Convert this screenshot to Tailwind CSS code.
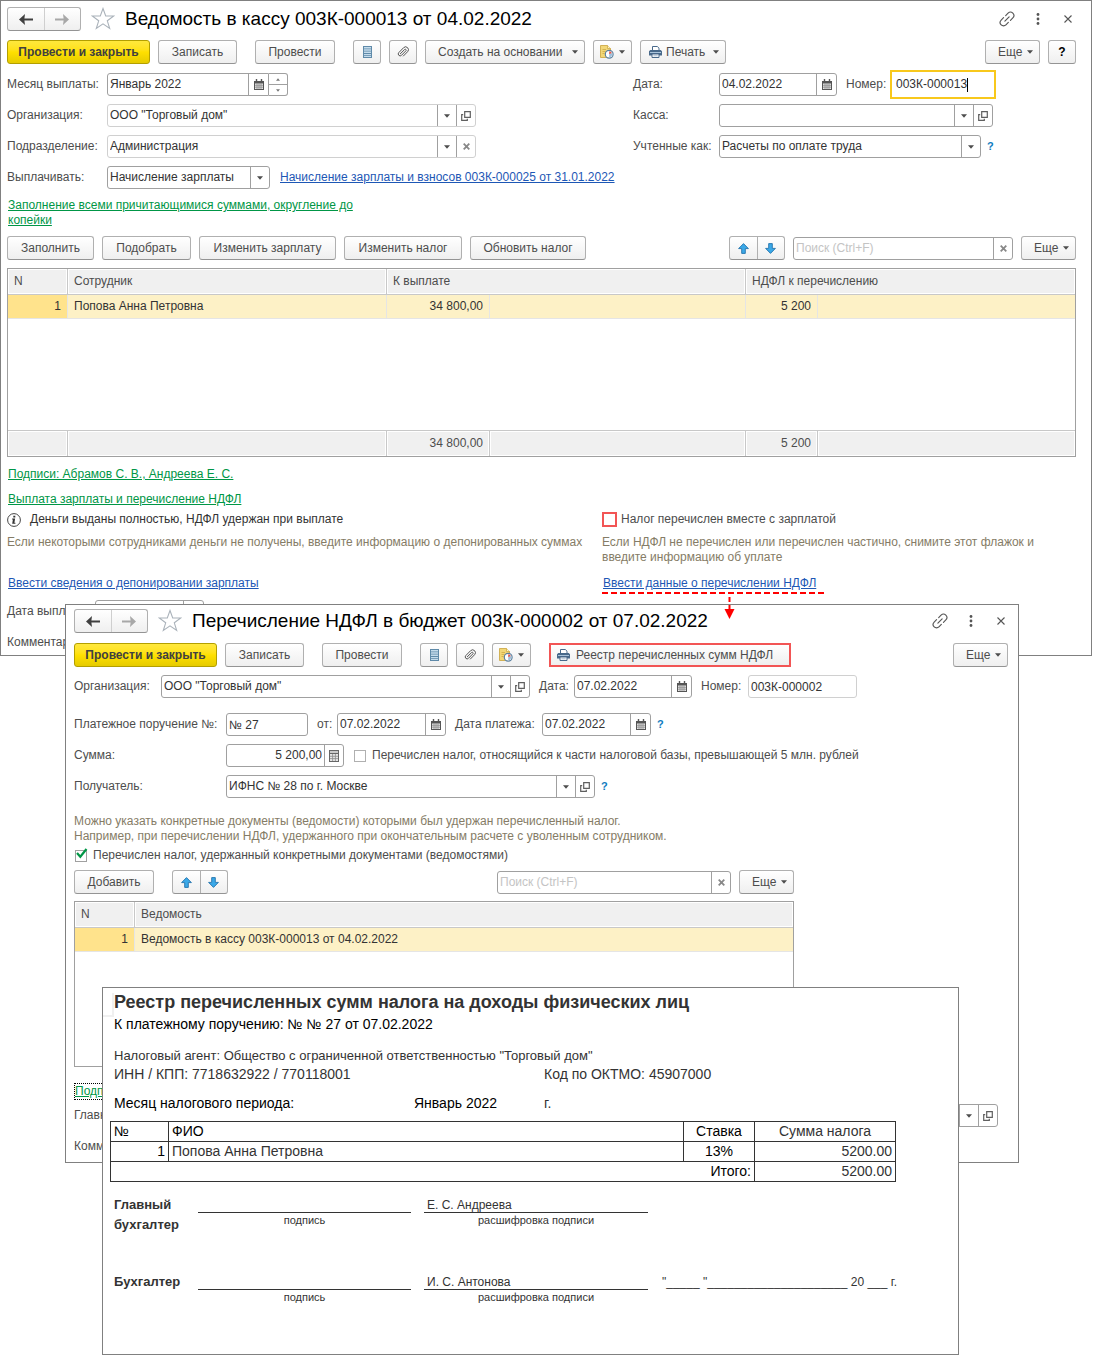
<!DOCTYPE html>
<html lang="ru">
<head>
<meta charset="UTF-8">
<meta name="viewport" content="width=device-width, initial-scale=1.0">
<title>Ведомость в кассу 003К-000013 от 04.02.2022</title>
<script src="https://cdn.jsdelivr.net/npm/@tailwindcss/browser@4"></script>
</head>
<body class="relative min-h-screen bg-white font-['Liberation_Sans',Arial,sans-serif] text-xs/[15px] text-[#4d4d4d]">

<!-- icons -->
<svg class="hidden" xmlns="http://www.w3.org/2000/svg">
  <symbol id="i-back" viewBox="0 0 14 11"><path fill="currentColor" d="M6 0 0 5.5 6 11 5.4 6.6H14V4.4H5.4z"/></symbol>
  <symbol id="i-forward" viewBox="0 0 14 11"><path fill="currentColor" d="M8 0l6 5.500L8 11l.6-4.400H0V4.400h8.600z"/></symbol>
  <symbol id="i-star" viewBox="0 0 24 24"><path fill="none" stroke="currentColor" stroke-width="1.100" d="M12 1.500l2.700 7.500h8l-6.400 4.800 2.400 7.700L12 16.900l-6.700 4.600 2.400-7.700L1.300 9h8z"/></symbol>
  <symbol id="i-link" viewBox="0 0 24 24"><path fill="none" stroke="currentColor" stroke-width="1.500" stroke-linecap="round" transform="rotate(-45 12 12)" d="M10 16.500H5.500a4.500 4.500 0 0 1 0-9H10M14 7.500h4.500a4.500 4.500 0 0 1 0 9H14M8 12h8"/></symbol>
  <symbol id="i-dots" viewBox="0 0 4 12"><g fill="currentColor"><circle cx="2" cy="1.500" r="1.400"/><circle cx="2" cy="6" r="1.400"/><circle cx="2" cy="10.500" r="1.400"/></g></symbol>
  <symbol id="i-close" viewBox="0 0 8 8"><path fill="none" stroke="currentColor" stroke-width="1.100" d="M.5.5l7 7M7.500.5l-7 7"/></symbol>
  <symbol id="i-clear" viewBox="0 0 7 7"><path fill="none" stroke="currentColor" stroke-width="1.800" d="M.7.7l5.600 5.600M6.300.7L.7 6.300"/></symbol>
  <symbol id="i-caret" viewBox="0 0 6 4"><path fill="currentColor" d="M0 .3h6L3 3.700z"/></symbol>
  <symbol id="i-caret-up" viewBox="0 0 4 3"><path fill="currentColor" d="M0 2.700h4L2 .3z"/></symbol>
  <symbol id="i-open" viewBox="0 0 10 10"><path fill="none" stroke="#5f5f5f" stroke-width="1.200" d="M3.700.7h5.600v5.600H3.700zM2.200 3.700H.7v5.600h5.600V7.800"/></symbol>
  <symbol id="i-calendar" viewBox="0 0 10 11"><path fill="#555" d="M0 2h10v9H0zM1.800 0h1.400v2H1.800zM6.800 0h1.400v2H6.800z"/><path fill="#e6e6e6" d="M1 4.500h8V10H1z"/><path stroke="#8a8a8a" stroke-width=".8" d="M1 6.300h8M1 8.200h8M3 4.500V10M5 4.500V10M7 4.500V10"/></symbol>
  <symbol id="i-calc" viewBox="0 0 10 12"><path fill="#666" d="M0 0h10v12H0z"/><path fill="#c9c9c9" d="M1 1h8v2H1z"/><path fill="#e6e6e6" d="M1 4h8v7H1z"/><path stroke="#8a8a8a" stroke-width=".8" d="M1 6.300h8M1 8.600h8M3.600 4v7M6.400 4v7"/></symbol>
  <symbol id="i-list" viewBox="0 0 9 12"><path fill="#5f8aa9" d="M0 0h9v12H0z"/><path fill="#c5dcec" d="M1 1h7v1.500H1zM1 3.300h7v1.500H1zM1 5.600h7v1.500H1zM1 7.900h7v1.400H1zM1 10h7v1H1z"/></symbol>
  <symbol id="i-clip" viewBox="0 0 12 12"><path fill="none" stroke="#555" stroke-width="1" stroke-linecap="round" d="M3.300 7.800l4.300-4.300a.9.9 0 0 1 1.300 1.300L4.500 9.300a1.900 1.900 0 0 1-2.700-2.700L6.600 1.700a2.800 2.800 0 0 1 4 4L6.400 10"/></symbol>
  <symbol id="i-report" viewBox="0 0 14 14"><path fill="#f2d777" stroke="#c9a33c" stroke-width=".8" d="M.5.5h7l3 3v9h-10z"/><path fill="#fff4c4" stroke="#c9a33c" stroke-width=".7" d="M7.500.5v3h3"/><path stroke="#c9a33c" stroke-width=".7" d="M2.500 4.500H6M2.500 6.500h3M2.500 8.500h2"/><circle cx="9.200" cy="9.200" r="3.900" fill="#fff" stroke="#5b7f9e" stroke-width="1.200"/><path fill="#e0574a" d="M9.200 9.200V6.200a3 3 0 0 1 2.800 2z"/><path fill="#9cc0dd" d="M9.200 9.200l2.800-1a3 3 0 0 1-2.800 4z"/></symbol>
  <symbol id="i-print" viewBox="0 0 13 12"><path fill="#fff" stroke="#48698a" d="M3.500 4.500v-4h4.800l1.700 1.700v2.300"/><path fill="#48698a" d="M1.300 4h10.400L13 5.300v4.200H0V5.300z"/><path fill="#a9c3da" d="M1 6h11v1H1z"/><path fill="#fff" stroke="#48698a" d="M3 8h7v3.500H3z"/><path stroke="#8fa9c2" stroke-width=".8" d="M4.300 9.800h4.400"/></symbol>
  <symbol id="i-up" viewBox="0 0 11 11"><path fill="#3ba9e8" stroke="#2373ad" stroke-width=".9" stroke-linejoin="round" d="M5.500.6l4.900 5H7.300v4.800H3.700V5.600H.6z"/></symbol>
  <symbol id="i-down" viewBox="0 0 11 11"><path fill="#3ba9e8" stroke="#2373ad" stroke-width=".9" stroke-linejoin="round" d="M5.500 10.400l4.900-5H7.300V.6H3.700v4.800H.6z"/></symbol>
  <symbol id="i-info" viewBox="0 0 14 14"><circle cx="7" cy="7" r="6.400" fill="none" stroke="#444" stroke-width="1"/><path fill="#333" d="M6.300 2.800h2v1.700h-2zM5.200 5.600h2.900L7.400 9.800h1v1H5.200l.7-4.200h-.9z"/></symbol>
  <symbol id="i-check" viewBox="0 0 13 12"><path fill="none" stroke="#009646" stroke-width="2.200" d="M2 5l3.300 3.700L11.500 1"/></symbol>
</svg>

<!-- Ведомость в кассу -->
<main class="mr-[2px] border border-[#808080] bg-white pt-[6px] pr-[7px] pb-px pl-[6px]">
  <header class="flex h-6 items-center">
    <div class="flex h-6 w-[74px] rounded-[3px] border border-[#b0b0b0] border-b-[#949494] bg-linear-to-b from-white to-[#efefef]">
      <button class="flex flex-1 items-center justify-center border-r border-[#cfcfcf] text-[#404040]" aria-label="Назад"><svg class="h-[11px] w-3.5"><use href="#i-back"/></svg></button>
      <button class="flex flex-1 items-center justify-center text-[#a8a8a8]" aria-label="Вперед"><svg class="h-[11px] w-3.5"><use href="#i-forward"/></svg></button>
    </div>
    <button class="ml-2.5 text-[#aab2ba]" aria-label="В избранное"><svg class="size-6"><use href="#i-star"/></svg></button>
    <h1 class="ml-2.5 text-[19px] leading-6 text-black">Ведомость в кассу 003К-000013 от 04.02.2022</h1>
    <div class="ml-auto flex items-center pr-3 text-[#555]">
      <button aria-label="Ссылка"><svg class="size-[18px]"><use href="#i-link"/></svg></button>
      <button class="ml-5" aria-label="Меню"><svg class="h-3 w-1"><use href="#i-dots"/></svg></button>
      <button class="ml-6" aria-label="Закрыть"><svg class="size-2"><use href="#i-close"/></svg></button>
    </div>
  </header>

  <div class="mt-[9px] flex h-6 items-center gap-2">
    <button class="h-6 w-[143px] rounded-[3px] border border-[#b39f00] bg-linear-to-b from-[#ffe83c] via-[#ffe000] to-[#e6cb00] font-bold text-[#404040]">Провести и закрыть</button>
    <button class="h-6 w-[79px] rounded-[3px] border border-[#b0b0b0] border-b-[#949494] bg-linear-to-b from-white to-[#efefef]">Записать</button>
    <button class="mx-2.5 h-6 w-20 rounded-[3px] border border-[#b0b0b0] border-b-[#949494] bg-linear-to-b from-white to-[#efefef]">Провести</button>
    <button class="flex h-6 w-7 items-center justify-center rounded-[3px] border border-[#b0b0b0] border-b-[#949494] bg-linear-to-b from-white to-[#efefef]" aria-label="Движения"><svg class="h-3 w-[9px]"><use href="#i-list"/></svg></button>
    <button class="flex h-6 w-7 items-center justify-center rounded-[3px] border border-[#b0b0b0] border-b-[#949494] bg-linear-to-b from-white to-[#efefef]" aria-label="Файлы"><svg class="size-3"><use href="#i-clip"/></svg></button>
    <button class="flex h-6 w-40 items-center justify-between rounded-[3px] border border-[#b0b0b0] border-b-[#949494] bg-linear-to-b from-white to-[#efefef] pr-1.5 pl-3">Создать на основании <svg class="h-1 w-1.5"><use href="#i-caret"/></svg></button>
    <button class="flex h-6 w-[39px] items-center justify-between rounded-[3px] border border-[#b0b0b0] border-b-[#949494] bg-linear-to-b from-white to-[#efefef] px-1.5" aria-label="Отчеты"><svg class="size-3.5"><use href="#i-report"/></svg><svg class="h-1 w-1.5"><use href="#i-caret"/></svg></button>
    <button class="flex h-6 w-[86px] items-center rounded-[3px] border border-[#b0b0b0] border-b-[#949494] bg-linear-to-b from-white to-[#efefef] pr-1.5 pl-2"><svg class="mr-1 h-3 w-[13px]"><use href="#i-print"/></svg>Печать<svg class="ml-auto h-1 w-1.5"><use href="#i-caret"/></svg></button>
    <button class="ml-auto flex h-6 w-[55px] items-center justify-between rounded-[3px] border border-[#b0b0b0] border-b-[#949494] bg-linear-to-b from-white to-[#efefef] pr-1.5 pl-3">Еще <svg class="h-1 w-1.5"><use href="#i-caret"/></svg></button>
    <button class="mr-2 h-6 w-7 rounded-[3px] border border-[#b0b0b0] border-b-[#949494] bg-linear-to-b from-white to-[#efefef] font-bold text-black">?</button>
  </div>

  <div class="mt-[9px] grid grid-cols-[626fr_451fr]">
    <div class="flex flex-col gap-2">
      <div class="flex h-[23px] items-center">
        <label for="month" class="w-[100px]">Месяц выплаты:</label>
        <div class="flex h-[23px] w-[162px] rounded-l-[3px] border border-[#a0a0a0]">
          <input id="month" type="text" value="Январь 2022" class="min-w-0 flex-1 px-0.5 text-[#333]">
          <button class="flex w-5 items-center justify-center border-l border-[#a0a0a0]" aria-label="Календарь"><svg class="h-[11px] w-2.5"><use href="#i-calendar"/></svg></button>
        </div>
        <div class="flex h-[23px] w-[19px] flex-col rounded-r-[3px] border border-l-0 border-[#a0a0a0] text-[#777]">
          <button class="flex flex-1 items-center justify-center border-b border-[#a0a0a0]" aria-label="Больше"><svg class="h-[3px] w-1"><use href="#i-caret-up"/></svg></button>
          <button class="flex flex-1 items-center justify-center" aria-label="Меньше"><svg class="h-[3px] w-1"><use href="#i-caret"/></svg></button>
        </div>
      </div>
      <div class="flex h-[23px] items-center">
        <label for="org" class="w-[100px]">Организация:</label>
        <div class="flex h-[23px] w-[369px] rounded-[3px] border border-[#d0d0d0]">
          <select id="org" class="min-w-0 flex-1 appearance-none px-0.5 text-[#333]"><option>ООО "Торговый дом"</option></select>
          <span class="flex w-[19px] items-center justify-center border-l border-[#a0a0a0]"><svg class="h-1 w-1.5"><use href="#i-caret"/></svg></span>
          <button class="flex w-[19px] items-center justify-center border-l border-[#a0a0a0]" aria-label="Открыть"><svg class="size-2.5"><use href="#i-open"/></svg></button>
        </div>
      </div>
      <div class="flex h-[23px] items-center">
        <label for="dept" class="w-[100px]">Подразделение:</label>
        <div class="flex h-[23px] w-[369px] rounded-[3px] border border-[#d0d0d0]">
          <select id="dept" class="min-w-0 flex-1 appearance-none px-0.5 text-[#333]"><option>Администрация</option></select>
          <span class="flex w-[19px] items-center justify-center border-l border-[#a0a0a0]"><svg class="h-1 w-1.5"><use href="#i-caret"/></svg></span>
          <button class="flex w-[19px] items-center justify-center border-l border-[#a0a0a0] text-[#888]" aria-label="Очистить"><svg class="size-[7px]"><use href="#i-clear"/></svg></button>
        </div>
      </div>
      <div class="flex h-[23px] items-center">
        <label for="pay" class="w-[100px]">Выплачивать:</label>
        <div class="flex h-[23px] w-[163px] rounded-[3px] border border-[#a0a0a0]">
          <select id="pay" class="min-w-0 flex-1 appearance-none px-0.5 text-[#333]"><option>Начисление зарплаты</option></select>
          <span class="flex w-[19px] items-center justify-center border-l border-[#a0a0a0]"><svg class="h-1 w-1.5"><use href="#i-caret"/></svg></span>
        </div>
        <a href="#" class="ml-2.5 text-[#1d57b5] underline">Начисление зарплаты и взносов 003К-000025 от 31.01.2022</a>
      </div>
    </div>

    <div class="flex flex-col gap-2">
      <div class="flex h-[23px] items-center">
        <label for="date" class="w-[86px]">Дата:</label>
        <div class="flex h-[23px] w-[118px] rounded-[3px] border border-[#a0a0a0]">
          <input id="date" type="text" value="04.02.2022" class="min-w-0 flex-1 px-0.5 text-[#333]">
          <button class="flex w-5 items-center justify-center border-l border-[#a0a0a0]" aria-label="Календарь"><svg class="h-[11px] w-2.5"><use href="#i-calendar"/></svg></button>
        </div>
        <label for="number" class="ml-[9px] w-11">Номер:</label>
        <div class="-my-1 flex h-[29px] w-[106px] items-center border-2 border-[#f8c81c] pl-1">
          <input id="number" type="text" value="003К-000013" class="field-sizing-content text-[#333]">
          <span class="h-3.5 w-px bg-black"></span>
        </div>
      </div>
      <div class="flex h-[23px] items-center">
        <label for="cash" class="w-[86px]">Касса:</label>
        <div class="flex h-[23px] w-[274px] rounded-[3px] border border-[#a0a0a0]">
          <select id="cash" class="min-w-0 flex-1 appearance-none px-0.5 text-[#333]"><option></option></select>
          <span class="flex w-[19px] items-center justify-center border-l border-[#a0a0a0]"><svg class="h-1 w-1.5"><use href="#i-caret"/></svg></span>
          <button class="flex w-[19px] items-center justify-center border-l border-[#a0a0a0]" aria-label="Открыть"><svg class="size-2.5"><use href="#i-open"/></svg></button>
        </div>
      </div>
      <div class="flex h-[23px] items-center">
        <label for="kind" class="w-[86px]">Учтенные как:</label>
        <div class="flex h-[23px] w-[262px] rounded-[3px] border border-[#a0a0a0]">
          <select id="kind" class="min-w-0 flex-1 appearance-none px-0.5 text-[#333]"><option>Расчеты по оплате труда</option></select>
          <span class="flex w-[19px] items-center justify-center border-l border-[#a0a0a0]"><svg class="h-1 w-1.5"><use href="#i-caret"/></svg></span>
        </div>
        <a href="#" class="ml-1.5 text-[11px] font-bold text-[#0f7cc0]">?</a>
      </div>
    </div>
  </div>

  <a href="#" class="mt-[9px] ml-px block max-w-[380px] text-[#009646] underline">Заполнение всеми причитающимися суммами, округление до копейки</a>

  <div class="mt-2 mr-2 flex h-6 items-center gap-2">
    <button class="h-6 w-[87px] rounded-[3px] border border-[#b0b0b0] border-b-[#949494] bg-linear-to-b from-white to-[#efefef]">Заполнить</button>
    <button class="h-6 w-[89px] rounded-[3px] border border-[#b0b0b0] border-b-[#949494] bg-linear-to-b from-white to-[#efefef]">Подобрать</button>
    <button class="h-6 w-[137px] rounded-[3px] border border-[#b0b0b0] border-b-[#949494] bg-linear-to-b from-white to-[#efefef]">Изменить зарплату</button>
    <button class="h-6 w-[118px] rounded-[3px] border border-[#b0b0b0] border-b-[#949494] bg-linear-to-b from-white to-[#efefef]">Изменить налог</button>
    <button class="h-6 w-[116px] rounded-[3px] border border-[#b0b0b0] border-b-[#949494] bg-linear-to-b from-white to-[#efefef]">Обновить налог</button>
    <div class="ml-auto flex h-6 w-14 rounded-[3px] border border-[#b0b0b0] border-b-[#949494] bg-linear-to-b from-white to-[#efefef]">
      <button class="flex flex-1 items-center justify-center border-r border-[#b0b0b0]" aria-label="Вверх"><svg class="size-[11px]"><use href="#i-up"/></svg></button>
      <button class="flex flex-1 items-center justify-center" aria-label="Вниз"><svg class="size-[11px]"><use href="#i-down"/></svg></button>
    </div>
    <div class="flex h-[23px] w-[220px] rounded-[3px] border border-[#a0a0a0]">
      <input type="search" placeholder="Поиск (Ctrl+F)" aria-label="Поиск" class="min-w-0 flex-1 px-0.5 placeholder:text-[#c4c4c4]">
      <button class="flex w-[19px] items-center justify-center border-l border-[#a0a0a0] text-[#888]" aria-label="Очистить"><svg class="size-[7px]"><use href="#i-clear"/></svg></button>
    </div>
    <button class="flex h-6 w-[55px] items-center justify-between rounded-[3px] border border-[#b0b0b0] border-b-[#949494] bg-linear-to-b from-white to-[#efefef] pr-1.5 pl-3">Еще <svg class="h-1 w-1.5"><use href="#i-caret"/></svg></button>
  </div>

  <div class="mt-2 mr-2 border border-[#a0a0a0]">
    <table class="w-full table-fixed border-separate border-spacing-0">
      <colgroup><col class="w-[60px]"><col class="w-[319px]"><col class="w-[103px]"><col><col class="w-[72px]"><col class="w-[257px]"></colgroup>
      <thead>
        <tr class="h-[26px] bg-[#f0f0f0] text-left">
          <th class="border-r border-b border-[#c8c8c8] px-1.5 font-normal shadow-[inset_0_0_0_1px_#fff]">N</th>
          <th class="border-r border-b border-[#c8c8c8] px-1.5 font-normal shadow-[inset_0_0_0_1px_#fff]">Сотрудник</th>
          <th colspan="2" class="border-r border-b border-[#c8c8c8] px-1.5 font-normal shadow-[inset_0_0_0_1px_#fff]">К выплате</th>
          <th colspan="2" class="border-b border-[#c8c8c8] px-1.5 font-normal shadow-[inset_0_0_0_1px_#fff]">НДФЛ к перечислению</th>
        </tr>
      </thead>
      <tbody class="text-[#333]">
        <tr class="h-6 bg-[#fdf1c6]">
          <td class="border-r border-b border-[#e5e5e5] bg-[#ffe38c] px-1.5 text-right">1</td>
          <td class="border-r border-b border-[#e5e5e5] px-1.5">Попова Анна Петровна</td>
          <td class="border-r border-b border-[#e5e5e5] px-1.5 text-right">34 800,00</td>
          <td class="border-r border-b border-[#e5e5e5]"></td>
          <td class="border-r border-b border-[#e5e5e5] px-1.5 text-right">5 200</td>
          <td class="border-b border-[#e5e5e5]"></td>
        </tr>
        <tr class="h-[111px]"><td colspan="6"></td></tr>
      </tbody>
      <tfoot class="text-[#4d4d4d]">
        <tr class="h-[26px] bg-[#f0f0f0]">
          <td class="border-t border-r border-[#c8c8c8] shadow-[inset_0_0_0_1px_#fff]"></td>
          <td class="border-t border-r border-[#c8c8c8] shadow-[inset_0_0_0_1px_#fff]"></td>
          <td class="border-t border-r border-[#c8c8c8] px-1.5 text-right shadow-[inset_0_0_0_1px_#fff]">34 800,00</td>
          <td class="border-t border-r border-[#c8c8c8] shadow-[inset_0_0_0_1px_#fff]"></td>
          <td class="border-t border-r border-[#c8c8c8] px-1.5 text-right shadow-[inset_0_0_0_1px_#fff]">5 200</td>
          <td class="border-t border-[#c8c8c8] shadow-[inset_0_0_0_1px_#fff]"></td>
        </tr>
      </tfoot>
    </table>
  </div>

  <div class="mt-2.5 ml-px flex flex-col items-start gap-2.5">
    <a href="#" class="text-[#009646] underline">Подписи: Абрамов С. В., Андреева Е. С.</a>
    <a href="#" class="text-[#009646] underline">Выплата зарплаты и перечисление НДФЛ</a>
  </div>

  <div class="mt-[5px] grid grid-cols-[595fr_482fr]">
    <div class="flex flex-col items-start">
      <p class="flex h-[15px] items-center gap-[9px] text-[#333]"><svg class="size-3.5"><use href="#i-info"/></svg>Деньги выданы полностью, НДФЛ удержан при выплате</p>
      <p class="mt-2 h-[30px] whitespace-nowrap text-[#857c66]">Если некоторыми сотрудниками деньги не получены, введите информацию о депонированных суммах</p>
      <a href="#" class="mt-[11px] ml-px text-[#1d57b5] underline">Ввести сведения о депонировании зарплаты</a>
    </div>
    <div class="flex flex-col items-start">
      <label class="flex h-[15px] items-center gap-1"><input type="checkbox" class="size-[15px] appearance-none border-2 border-[#f25555] bg-white">Налог перечислен вместе с зарплатой</label>
      <p class="mt-2 max-w-[460px] text-[#857c66]">Если НДФЛ не перечислен или перечислен частично, снимите этот флажок и введите информацию об уплате</p>
      <div class="relative mt-[11px]">
        <a href="#" class="ml-px text-[#1d57b5] underline">Ввести данные о перечислении НДФЛ</a>
        <svg class="absolute top-[15px] left-0 z-20 h-7 w-[222px]" viewBox="0 0 222 28"><path stroke="#f00" stroke-width="2" stroke-dasharray="6 3" d="M0 2h222"/><path stroke="#f00" stroke-width="2" stroke-dasharray="5 3" d="M127.500 6v14"/><path fill="#f00" d="M122.500 18h10l-5 10z"/></svg>
      </div>
    </div>
  </div>

  <div class="mt-[9px] flex h-[23px] items-center">
    <label for="paid" class="w-[88px] whitespace-nowrap">Дата выплаты:</label>
    <div class="flex h-[23px] w-[109px] rounded-[3px] border border-[#a0a0a0]">
      <input id="paid" type="text" class="min-w-0 flex-1 px-0.5">
      <button class="w-5 border-l border-[#a0a0a0]" aria-label="Календарь"></button>
    </div>
  </div>
  <p class="mt-2 h-[23px] leading-[23px]">Комментарий:</p>
</main>

<!-- Перечисление НДФЛ в бюджет -->
<section class="absolute top-[604px] right-[75px] left-[65px] z-10 border border-[#808080] bg-white px-2 pt-1 pb-1">
  <header class="flex h-6 items-center">
    <div class="flex h-6 w-[74px] rounded-[3px] border border-[#b0b0b0] border-b-[#949494] bg-linear-to-b from-white to-[#efefef]">
      <button class="flex flex-1 items-center justify-center border-r border-[#cfcfcf] text-[#404040]" aria-label="Назад"><svg class="h-[11px] w-3.5"><use href="#i-back"/></svg></button>
      <button class="flex flex-1 items-center justify-center text-[#a8a8a8]" aria-label="Вперед"><svg class="h-[11px] w-3.5"><use href="#i-forward"/></svg></button>
    </div>
    <button class="ml-2.5 text-[#aab2ba]" aria-label="В избранное"><svg class="size-6"><use href="#i-star"/></svg></button>
    <h2 class="ml-2.5 text-[19px] leading-6 text-black">Перечисление НДФЛ в бюджет 003К-000002 от 07.02.2022</h2>
    <div class="ml-auto flex items-center pr-[5px] text-[#555]">
      <button aria-label="Ссылка"><svg class="size-[18px]"><use href="#i-link"/></svg></button>
      <button class="ml-5" aria-label="Меню"><svg class="h-3 w-1"><use href="#i-dots"/></svg></button>
      <button class="ml-6" aria-label="Закрыть"><svg class="size-2"><use href="#i-close"/></svg></button>
    </div>
  </header>

  <div class="mt-2.5 mr-0.5 flex h-6 items-center gap-2">
    <button class="h-6 w-[143px] rounded-[3px] border border-[#b39f00] bg-linear-to-b from-[#ffe83c] via-[#ffe000] to-[#e6cb00] font-bold text-[#404040]">Провести и закрыть</button>
    <button class="h-6 w-[79px] rounded-[3px] border border-[#b0b0b0] border-b-[#949494] bg-linear-to-b from-white to-[#efefef]">Записать</button>
    <button class="mx-2.5 h-6 w-20 rounded-[3px] border border-[#b0b0b0] border-b-[#949494] bg-linear-to-b from-white to-[#efefef]">Провести</button>
    <button class="flex h-6 w-7 items-center justify-center rounded-[3px] border border-[#b0b0b0] border-b-[#949494] bg-linear-to-b from-white to-[#efefef]" aria-label="Движения"><svg class="h-3 w-[9px]"><use href="#i-list"/></svg></button>
    <button class="flex h-6 w-7 items-center justify-center rounded-[3px] border border-[#b0b0b0] border-b-[#949494] bg-linear-to-b from-white to-[#efefef]" aria-label="Файлы"><svg class="size-3"><use href="#i-clip"/></svg></button>
    <button class="flex h-6 w-[39px] items-center justify-between rounded-[3px] border border-[#b0b0b0] border-b-[#949494] bg-linear-to-b from-white to-[#efefef] px-1.5" aria-label="Отчеты"><svg class="size-3.5"><use href="#i-report"/></svg><svg class="h-1 w-1.5"><use href="#i-caret"/></svg></button>
    <button class="ml-2.5 flex h-6 w-[242px] items-center border-2 border-[#f25555] bg-linear-to-b from-white to-[#efefef] pl-1.5"><svg class="mr-1.5 h-3 w-[13px]"><use href="#i-print"/></svg>Реестр перечисленных сумм НДФЛ</button>
    <button class="ml-auto flex h-6 w-[55px] items-center justify-between rounded-[3px] border border-[#b0b0b0] border-b-[#949494] bg-linear-to-b from-white to-[#efefef] pr-1.5 pl-3">Еще <svg class="h-1 w-1.5"><use href="#i-caret"/></svg></button>
  </div>

  <div class="mt-2 flex h-[23px] items-center">
    <label for="org2" class="w-[87px]">Организация:</label>
    <div class="flex h-[23px] w-[369px] rounded-[3px] border border-[#a0a0a0]">
      <select id="org2" class="min-w-0 flex-1 appearance-none px-0.5 text-[#333]"><option>ООО "Торговый дом"</option></select>
      <span class="flex w-[19px] items-center justify-center border-l border-[#a0a0a0]"><svg class="h-1 w-1.5"><use href="#i-caret"/></svg></span>
      <button class="flex w-[19px] items-center justify-center border-l border-[#a0a0a0]" aria-label="Открыть"><svg class="size-2.5"><use href="#i-open"/></svg></button>
    </div>
    <label for="date2" class="ml-[9px] w-[35px]">Дата:</label>
    <div class="flex h-[23px] w-[118px] rounded-[3px] border border-[#a0a0a0]">
      <input id="date2" type="text" value="07.02.2022" class="min-w-0 flex-1 px-0.5 text-[#333]">
      <button class="flex w-5 items-center justify-center border-l border-[#a0a0a0]" aria-label="Календарь"><svg class="h-[11px] w-2.5"><use href="#i-calendar"/></svg></button>
    </div>
    <label for="number2" class="ml-[9px] w-[47px]">Номер:</label>
    <input id="number2" type="text" value="003К-000002" class="h-[23px] w-[109px] rounded-[3px] border border-[#d0d0d0] px-0.5 text-[#333]">
  </div>

  <div class="mt-[15px] flex h-[23px] items-center">
    <label for="order" class="w-[152px] whitespace-nowrap">Платежное поручение №:</label>
    <input id="order" type="text" value="№ 27" class="h-[23px] w-[82px] rounded-[3px] border border-[#a0a0a0] px-0.5 text-[#333]">
    <label for="from" class="ml-[9px] w-5">от:</label>
    <div class="flex h-[23px] w-[109px] rounded-[3px] border border-[#a0a0a0]">
      <input id="from" type="text" value="07.02.2022" class="min-w-0 flex-1 px-0.5 text-[#333]">
      <button class="flex w-5 items-center justify-center border-l border-[#a0a0a0]" aria-label="Календарь"><svg class="h-[11px] w-2.5"><use href="#i-calendar"/></svg></button>
    </div>
    <label for="paydate" class="ml-[9px] w-[87px]">Дата платежа:</label>
    <div class="flex h-[23px] w-[109px] rounded-[3px] border border-[#a0a0a0]">
      <input id="paydate" type="text" value="07.02.2022" class="min-w-0 flex-1 px-0.5 text-[#333]">
      <button class="flex w-5 items-center justify-center border-l border-[#a0a0a0]" aria-label="Календарь"><svg class="h-[11px] w-2.5"><use href="#i-calendar"/></svg></button>
    </div>
    <a href="#" class="ml-1.5 text-[11px] font-bold text-[#0f7cc0]">?</a>
  </div>

  <div class="mt-2 flex h-[23px] items-center">
    <label for="sum" class="w-[152px]">Сумма:</label>
    <div class="flex h-[23px] w-[118px] rounded-[3px] border border-[#a0a0a0]">
      <input id="sum" type="text" value="5 200,00" class="min-w-0 flex-1 px-0.5 text-right text-[#333]">
      <button class="flex w-[19px] items-center justify-center border-l border-[#a0a0a0]" aria-label="Калькулятор"><svg class="h-3 w-2.5"><use href="#i-calc"/></svg></button>
    </div>
    <label class="ml-2.5 flex items-center gap-1.5"><input type="checkbox" class="size-3 appearance-none border border-[#b0b0b0] bg-white">Перечислен налог, относящийся к части налоговой базы, превышающей 5 млн. рублей</label>
  </div>

  <div class="mt-2 flex h-[23px] items-center">
    <label for="payee" class="w-[152px]">Получатель:</label>
    <div class="flex h-[23px] w-[369px] rounded-[3px] border border-[#a0a0a0]">
      <select id="payee" class="min-w-0 flex-1 appearance-none px-0.5 text-[#333]"><option>ИФНС № 28 по г. Москве</option></select>
      <span class="flex w-[19px] items-center justify-center border-l border-[#a0a0a0]"><svg class="h-1 w-1.5"><use href="#i-caret"/></svg></span>
      <button class="flex w-[19px] items-center justify-center border-l border-[#a0a0a0]" aria-label="Открыть"><svg class="size-2.5"><use href="#i-open"/></svg></button>
    </div>
    <a href="#" class="ml-1.5 text-[11px] font-bold text-[#0f7cc0]">?</a>
  </div>

  <p class="mt-4 text-[#857c66]">Можно указать конкретные документы (ведомости) которыми был удержан перечисленный налог.<br>Например, при перечислении НДФЛ, удержанного при окончательным расчете с уволенным сотрудником.</p>

  <label class="relative mt-1 ml-px flex h-[15px] items-center gap-1.5">
    <input type="checkbox" checked class="size-3 appearance-none border border-[#a0a0a0] bg-white">
    <svg class="absolute top-0 left-0 h-3 w-[13px]"><use href="#i-check"/></svg>
    Перечислен налог, удержанный конкретными документами (ведомостями)
  </label>

  <div class="mt-[7px] max-w-[720px]">
    <div class="flex h-6 items-center gap-2">
      <button class="h-6 w-20 rounded-[3px] border border-[#b0b0b0] border-b-[#949494] bg-linear-to-b from-white to-[#efefef]">Добавить</button>
      <div class="ml-2.5 flex h-6 w-14 rounded-[3px] border border-[#b0b0b0] border-b-[#949494] bg-linear-to-b from-white to-[#efefef]">
        <button class="flex flex-1 items-center justify-center border-r border-[#b0b0b0]" aria-label="Вверх"><svg class="size-[11px]"><use href="#i-up"/></svg></button>
        <button class="flex flex-1 items-center justify-center" aria-label="Вниз"><svg class="size-[11px]"><use href="#i-down"/></svg></button>
      </div>
      <div class="ml-auto flex h-[23px] w-[234px] rounded-[3px] border border-[#a0a0a0]">
        <input type="search" placeholder="Поиск (Ctrl+F)" aria-label="Поиск" class="min-w-0 flex-1 px-0.5 placeholder:text-[#c4c4c4]">
        <button class="flex w-[19px] items-center justify-center border-l border-[#a0a0a0] text-[#888]" aria-label="Очистить"><svg class="size-[7px]"><use href="#i-clear"/></svg></button>
      </div>
      <button class="flex h-6 w-[55px] items-center justify-between rounded-[3px] border border-[#b0b0b0] border-b-[#949494] bg-linear-to-b from-white to-[#efefef] pr-1.5 pl-3">Еще <svg class="h-1 w-1.5"><use href="#i-caret"/></svg></button>
    </div>
    <div class="mt-[7px] h-[166px] border border-[#a0a0a0]">
      <table class="w-full table-fixed border-separate border-spacing-0">
        <colgroup><col class="w-[60px]"><col></colgroup>
        <thead>
          <tr class="h-[26px] bg-[#f0f0f0] text-left">
            <th class="border-r border-b border-[#c8c8c8] px-1.5 font-normal shadow-[inset_0_0_0_1px_#fff]">N</th>
            <th class="border-b border-[#c8c8c8] px-1.5 font-normal shadow-[inset_0_0_0_1px_#fff]">Ведомость</th>
          </tr>
        </thead>
        <tbody class="text-[#333]">
          <tr class="h-6 bg-[#fdf1c6]">
            <td class="border-r border-b border-[#e5e5e5] bg-[#ffe38c] px-1.5 text-right">1</td>
            <td class="border-b border-[#e5e5e5] px-1.5">Ведомость в кассу 003К-000013 от 04.02.2022</td>
          </tr>
        </tbody>
      </table>
    </div>
  </div>

  <a href="#" class="mt-4 block w-20 border border-dotted border-black text-[#009646] underline">Подписи</a>
  <div class="mt-1 mr-3 flex h-[23px] items-center">
    <label for="chief" class="w-[110px]">Главный бухгалтер:</label>
    <div class="flex h-[23px] flex-1 rounded-[3px] border border-[#a0a0a0]">
      <select id="chief" class="min-w-0 flex-1 appearance-none px-0.5"><option></option></select>
      <span class="flex w-[19px] items-center justify-center border-l border-[#a0a0a0]"><svg class="h-1 w-1.5"><use href="#i-caret"/></svg></span>
      <button class="flex w-[19px] items-center justify-center border-l border-[#a0a0a0]" aria-label="Открыть"><svg class="size-2.5"><use href="#i-open"/></svg></button>
    </div>
  </div>
  <p class="mt-2 h-[23px] leading-[23px]">Комментарий:</p>
</section>

<!-- Реестр перечисленных сумм -->
<article class="absolute top-[987px] right-[135px] left-[102px] z-30 h-[368px] border border-[#808080] bg-white pt-1 pl-[7px] text-[#333]">
  <span class="absolute top-[5px] left-0 h-6 w-[11px] border-r-2 border-b-2 border-[#f0f0f0]"></span>
  <div class="relative pl-1">
    <h2 class="text-[18px] leading-5 font-bold">Реестр перечисленных сумм налога на доходы физических лиц</h2>
    <p class="mt-0.5 text-sm/5 text-black">К платежному поручению: № № 27 от 07.02.2022</p>
    <p class="mt-3 text-[13px] leading-5">Налоговый агент: Общество с ограниченной ответственностью "Торговый дом"</p>
    <div class="grid grid-cols-[430px_1fr] text-sm/4">
      <p>ИНН / КПП: 7718632922 / 770118001</p>
      <p>Код по ОКТМО: 45907000</p>
    </div>
    <div class="mt-[11px] grid grid-cols-[300px_130px_1fr] text-sm/5 text-black">
      <p>Месяц налогового периода:</p>
      <p>Январь 2022</p>
      <p class="text-[#333]">г.</p>
    </div>
  </div>

  <table class="mt-2 w-[786px] table-fixed border-collapse text-sm/[19px] text-black">
    <colgroup><col class="w-[58px]"><col><col class="w-[71px]"><col class="w-[141px]"></colgroup>
    <thead>
      <tr>
        <th class="border border-[#333] px-[3px] text-left font-normal">№</th>
        <th class="border border-[#333] px-[3px] text-left font-normal">ФИО</th>
        <th class="border border-[#333] font-normal">Ставка</th>
        <th class="border border-[#333] font-normal text-[#333]">Сумма налога</th>
      </tr>
    </thead>
    <tbody>
      <tr>
        <td class="border border-[#333] px-[3px] text-right">1</td>
        <td class="border border-[#333] px-[3px] text-[#333]">Попова Анна Петровна</td>
        <td class="border border-[#333] text-center">13%</td>
        <td class="border border-[#333] px-[3px] text-right text-[#333]">5200.00</td>
      </tr>
      <tr>
        <td colspan="3" class="border border-[#333] px-[3px] text-right">Итого:</td>
        <td class="border border-[#333] px-[3px] text-right text-[#333]">5200.00</td>
      </tr>
    </tbody>
  </table>

  <div class="mt-[13px] grid grid-cols-[84px_213px_13px_224px_14px_1fr] pl-1">
    <p class="text-[13px] leading-5 font-bold">Главный<br>бухгалтер</p>
    <div><div class="h-[18px] border-b border-[#333]"></div><p class="text-center text-[11px] leading-[14px]">подпись</p></div>
    <span></span>
    <div><div class="h-[18px] border-b border-[#333] pl-[3px] leading-5">Е. С. Андреева</div><p class="text-center text-[11px] leading-[14px]">расшифровка подписи</p></div>
  </div>
  <div class="mt-[37px] grid grid-cols-[84px_213px_13px_224px_14px_1fr] pl-1">
    <p class="text-[13px] leading-5 font-bold">Бухгалтер</p>
    <div><div class="h-[18px] border-b border-[#333]"></div><p class="text-center text-[11px] leading-[14px]">подпись</p></div>
    <span></span>
    <div><div class="h-[18px] border-b border-[#333] pl-[3px] leading-5">И. С. Антонова</div><p class="text-center text-[11px] leading-[14px]">расшифровка подписи</p></div>
    <span></span>
    <p class="leading-5 whitespace-nowrap">"_____ "_____________________ 20 ___ г.</p>
  </div>
</article>

</body>
</html>
